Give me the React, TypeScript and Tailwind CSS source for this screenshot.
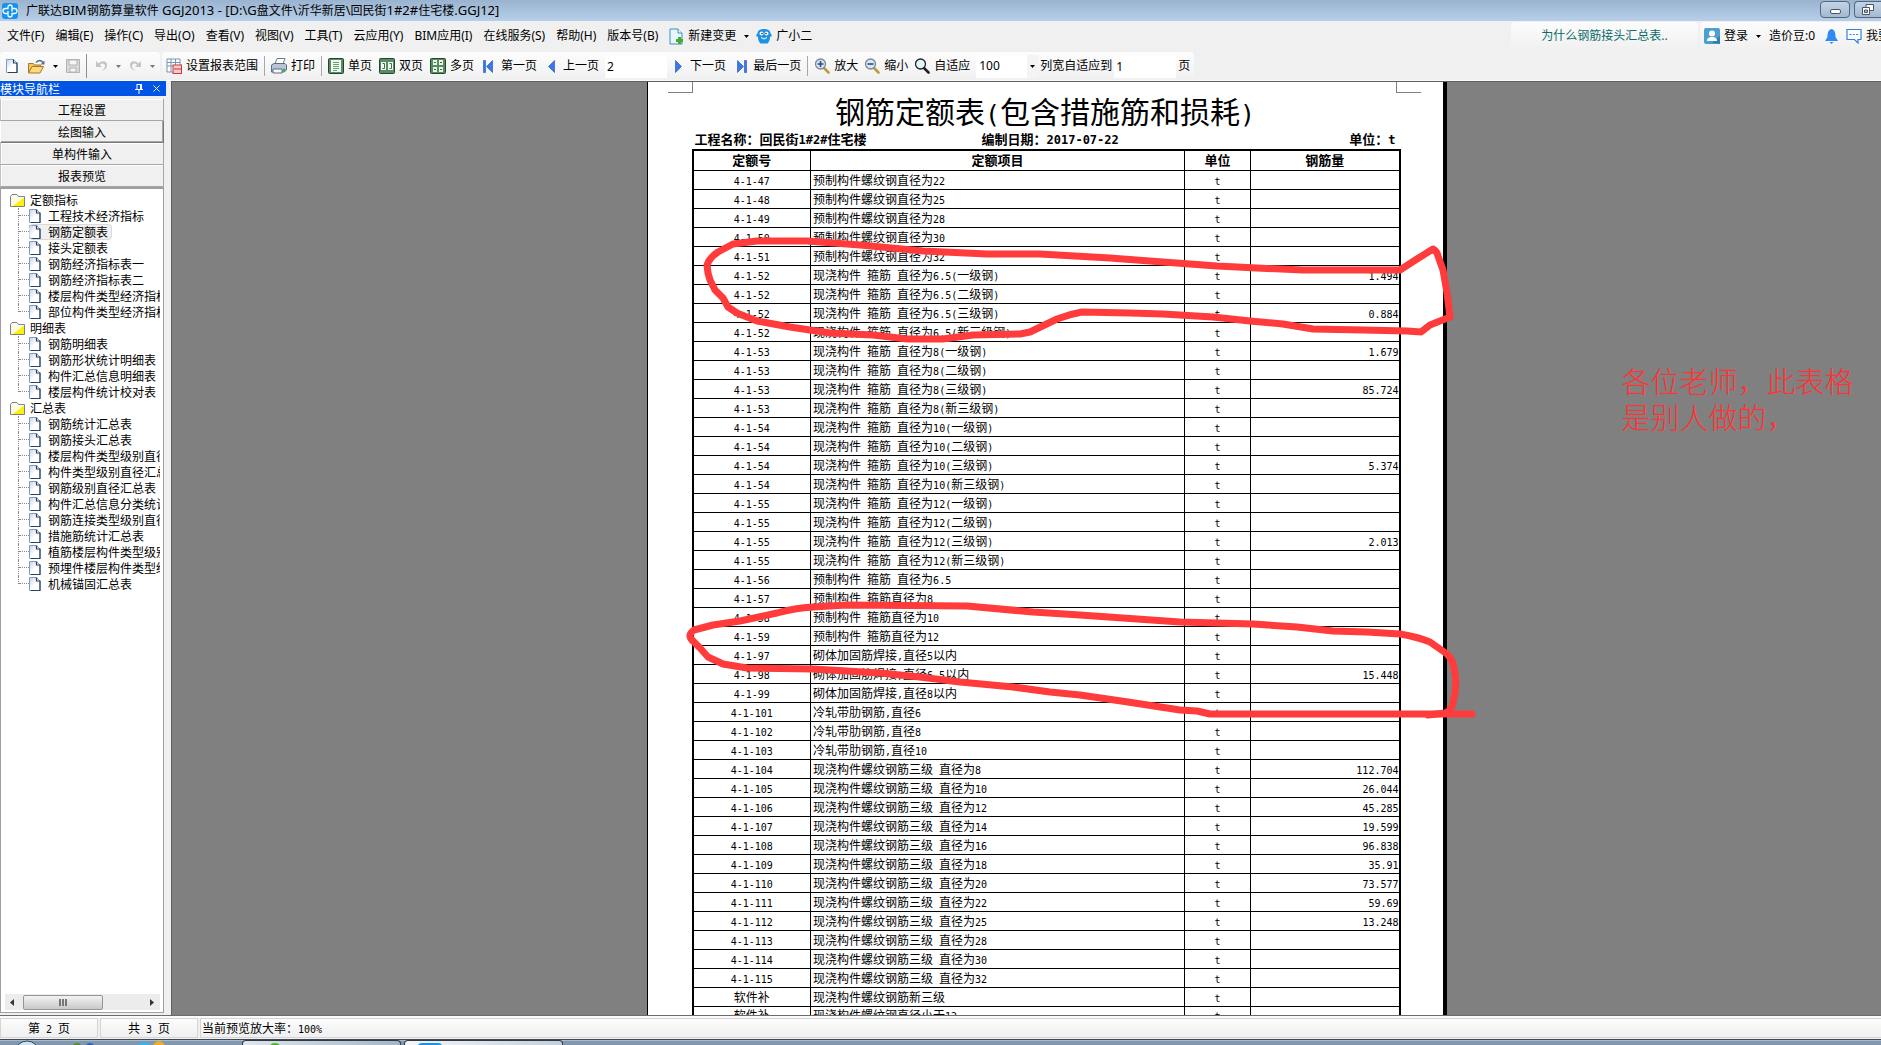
import type { ReactNode } from "react";
import { X } from "lucide-react";

const MENUS = [
  "文件(F)", "编辑(E)", "操作(C)", "导出(O)", "查看(V)", "视图(V)", "工具(T)",
  "云应用(Y)", "BIM应用(I)", "在线服务(S)", "帮助(H)", "版本号(B)",
];

const MODULES = ["工程设置", "绘图输入", "单构件输入", "报表预览"];

const TREE = [
  {
    name: "定额指标",
    items: ["工程技术经济指标", "钢筋定额表", "接头定额表", "钢筋经济指标表一", "钢筋经济指标表二", "楼层构件类型经济指标表", "部位构件类型经济指标表"],
  },
  {
    name: "明细表",
    items: ["钢筋明细表", "钢筋形状统计明细表", "构件汇总信息明细表", "楼层构件统计校对表"],
  },
  {
    name: "汇总表",
    items: [
      "钢筋统计汇总表", "钢筋接头汇总表", "楼层构件类型级别直径汇总表", "构件类型级别直径汇总表", "钢筋级别直径汇总表",
      "构件汇总信息分类统计表", "钢筋连接类型级别直径汇总表", "措施筋统计汇总表", "植筋楼层构件类型级别汇总表",
      "预埋件楼层构件类型级别表", "机械锚固汇总表",
    ],
  },
];

const ROWS: [string, string, string][] = [
  ["4-1-47", "预制构件螺纹钢直径为22", ""],
  ["4-1-48", "预制构件螺纹钢直径为25", ""],
  ["4-1-49", "预制构件螺纹钢直径为28", ""],
  ["4-1-50", "预制构件螺纹钢直径为30", ""],
  ["4-1-51", "预制构件螺纹钢直径为32", ""],
  ["4-1-52", "现浇构件 箍筋 直径为6.5(一级钢)", "1.494"],
  ["4-1-52", "现浇构件 箍筋 直径为6.5(二级钢)", ""],
  ["4-1-52", "现浇构件 箍筋 直径为6.5(三级钢)", "0.884"],
  ["4-1-52", "现浇构件 箍筋 直径为6.5(新三级钢)", ""],
  ["4-1-53", "现浇构件 箍筋 直径为8(一级钢)", "1.679"],
  ["4-1-53", "现浇构件 箍筋 直径为8(二级钢)", ""],
  ["4-1-53", "现浇构件 箍筋 直径为8(三级钢)", "85.724"],
  ["4-1-53", "现浇构件 箍筋 直径为8(新三级钢)", ""],
  ["4-1-54", "现浇构件 箍筋 直径为10(一级钢)", ""],
  ["4-1-54", "现浇构件 箍筋 直径为10(二级钢)", ""],
  ["4-1-54", "现浇构件 箍筋 直径为10(三级钢)", "5.374"],
  ["4-1-54", "现浇构件 箍筋 直径为10(新三级钢)", ""],
  ["4-1-55", "现浇构件 箍筋 直径为12(一级钢)", ""],
  ["4-1-55", "现浇构件 箍筋 直径为12(二级钢)", ""],
  ["4-1-55", "现浇构件 箍筋 直径为12(三级钢)", "2.013"],
  ["4-1-55", "现浇构件 箍筋 直径为12(新三级钢)", ""],
  ["4-1-56", "预制构件 箍筋 直径为6.5", ""],
  ["4-1-57", "预制构件 箍筋直径为8", ""],
  ["4-1-58", "预制构件 箍筋直径为10", ""],
  ["4-1-59", "预制构件 箍筋直径为12", ""],
  ["4-1-97", "砌体加固筋焊接,直径5以内", ""],
  ["4-1-98", "砌体加固筋焊接,直径6.5以内", "15.448"],
  ["4-1-99", "砌体加固筋焊接,直径8以内", ""],
  ["4-1-101", "冷轧带肋钢筋,直径6", ""],
  ["4-1-102", "冷轧带肋钢筋,直径8", ""],
  ["4-1-103", "冷轧带肋钢筋,直径10", ""],
  ["4-1-104", "现浇构件螺纹钢筋三级 直径为8", "112.704"],
  ["4-1-105", "现浇构件螺纹钢筋三级 直径为10", "26.044"],
  ["4-1-106", "现浇构件螺纹钢筋三级 直径为12", "45.285"],
  ["4-1-107", "现浇构件螺纹钢筋三级 直径为14", "19.599"],
  ["4-1-108", "现浇构件螺纹钢筋三级 直径为16", "96.838"],
  ["4-1-109", "现浇构件螺纹钢筋三级 直径为18", "35.91"],
  ["4-1-110", "现浇构件螺纹钢筋三级 直径为20", "73.577"],
  ["4-1-111", "现浇构件螺纹钢筋三级 直径为22", "59.69"],
  ["4-1-112", "现浇构件螺纹钢筋三级 直径为25", "13.248"],
  ["4-1-113", "现浇构件螺纹钢筋三级 直径为28", ""],
  ["4-1-114", "现浇构件螺纹钢筋三级 直径为30", ""],
  ["4-1-115", "现浇构件螺纹钢筋三级 直径为32", ""],
  ["软件补", "现浇构件螺纹钢筋新三级", ""],
  ["软件补", "现浇构件螺纹钢直径小于12", ""],
];

// Half-width characters take half of a full-width cell, so they get their own face
function Song({ text, latin = "font-['DejaVu_Sans_Mono',monospace] text-[10px]" }: { text: string; latin?: string }) {
  return (
    <>
      {text.split(/([\x20-\x7e]+)/).map((part, i) =>
        i % 2 ? (
          <span key={i} className={`leading-none whitespace-pre ${latin}`}>{part}</span>
        ) : (
          part
        )
      )}
    </>
  );
}

const BOLD_LATIN = "font-['DejaVu_Sans_Mono',monospace] text-xs";

function Caret({ dim = false }: { dim?: boolean }) {
  return (
    <svg width="5" height="3" viewBox="0 0 5 3" className={dim ? "text-[#777]" : "text-black"}>
      <path d="M0 0h5L2.5 3z" fill="currentColor" />
    </svg>
  );
}

function Sep() {
  return <div className="h-5 w-px bg-[#a8a8a8]" />;
}

function Tool({ label, icon, gap = "gap-1" }: { label: string; icon: ReactNode; gap?: string }) {
  return (
    <button className={`flex items-center whitespace-nowrap ${gap}`}>
      {icon}
      {label}
    </button>
  );
}

function DocIcon() {
  return (
    <svg width="12" height="14" viewBox="0 0 12 14" className="shrink-0">
      <path d="M.5.5h7l3.500 3.500v9.500H.5z" fill="url(#doc)" stroke="#7f9dbd" />
      <path d="M7.500.5v3.500H11v9.500H2" fill="none" stroke="#27415f" strokeWidth="1.200" />
      <defs>
        <linearGradient id="doc" x1="0" y1="0" x2="1" y2="1">
          <stop offset="0" stopColor="#c3d4e8" />
          <stop offset=".5" stopColor="#fff" />
        </linearGradient>
      </defs>
    </svg>
  );
}

function FolderIcon() {
  return (
    <svg width="15" height="13" viewBox="0 0 15 13" className="shrink-0">
      <path d="M.5 2.500 2 .5h5l1.500 2h6v10H.5z" fill="#fffde0" stroke="#808080" />
      <path d="M14 4v8H2.500z" fill="#fff200" />
      <path d="M1 3.500h13" stroke="#fff" />
    </svg>
  );
}

function PagesIcon({ kind }: { kind: "one" | "two" | "many" }) {
  return (
    <svg width="16" height="16" viewBox="0 0 16 16">
      <rect x=".5" y=".5" width="15" height="15" rx="1" fill="#5c8a63" stroke="#1f4a2a" />
      {kind === "one" && (
        <>
          <rect x="3" y="2" width="10" height="12" fill="#f4faf4" />
          <path d="M5 4.500h6M5 6.500h6M5 8.500h6M5 10.500h6M5 12.500h4" stroke="#6a9c72" />
        </>
      )}
      {kind === "two" && (
        <>
          <path d="M2 4h5v8H2zM9 4h5v8H9z" fill="#f4faf4" />
          <path d="M3.500 5.500h2v5h-2M10.500 5.500h2v5h-2" fill="none" stroke="#3b6f47" />
        </>
      )}
      {kind === "many" && (
        <>
          <path d="M3 2h4v5H3zM9 2h4v5H9zM3 9h4v5H3zM9 9h4v5H9z" fill="#e6f5e6" />
          <path d="M4 4.500h2M10 4.500h2M4 11.500h2M10 11.500h2" stroke="#3b6f47" />
        </>
      )}
    </svg>
  );
}

function NavIcon({ d, w }: { d: string; w: number }) {
  return (
    <svg width={w} height="13" viewBox={`0 0 ${w} 13`}>
      <path d={d} fill="#3a78e8" stroke="#1d4fb8" strokeWidth=".6" />
    </svg>
  );
}

function LensIcon({ mark, plain = false }: { mark?: string; plain?: boolean }) {
  return (
    <svg width="16" height="16" viewBox="0 0 16 16">
      <path d="M10 10l4.500 4.500" stroke={plain ? "#222" : "#c09a3c"} strokeWidth="2.600" strokeLinecap="round" />
      <circle cx="6.500" cy="6" r="5" fill={plain ? "#e3f6fb" : "#dbe6f3"} stroke={plain ? "#222" : "#7b8899"} strokeWidth="1.300" />
      {mark && <path d={mark} stroke="#2f4d86" strokeWidth="1.600" />}
    </svg>
  );
}

function ArrowBack({ flip = false }: { flip?: boolean }) {
  return (
    <svg width="13" height="12" viewBox="0 0 13 12" className={flip ? "-scale-x-100" : ""}>
      <path d="M1 1v6h6L5 5c2-2.500 5-1.500 5 1 0 2-1.500 3.500-3 5 3-1 5-3 5-6C12 1 7 0 3.500 3.500z" fill="#c4c4c4" />
    </svg>
  );
}

function TitleBar() {
  return (
    <header className="flex h-[21px] shrink-0 items-center justify-between bg-linear-to-b from-[#9ab3cf] to-[#b7cfe9] pl-0.5">
      <div className="flex items-center gap-2">
        <svg width="16" height="16" viewBox="0 0 16 16">
          <rect width="16" height="16" rx="3" fill="#1593f0" />
          <path d="M6 10.500H3.500a2 2 0 0 1 0-5H6V4a2 2 0 0 1 4 0v4.500M10 5.500h2.500a2 2 0 0 1 0 5H10V12a2 2 0 0 1-4 0V8" fill="none" stroke="#fff" strokeWidth="1.300" />
        </svg>
        <h1 className="text-xs leading-5">
          <Song text="广联达BIM钢筋算量软件 GGJ2013 - [D:\G盘文件\沂华新居\回民街1#2#住宅楼.GGJ12]" latin="text-[13px]" />
        </h1>
      </div>
      <div className="flex gap-1 self-start pt-px">
        <button aria-label="最小化" className="flex h-[17px] w-[30px] items-center justify-center rounded-sm border border-[#55677c] bg-linear-to-b from-[#c4d4e6] to-[#a3b9d1]">
          <span className="mt-1 h-[5px] w-[11px] rounded-xs border border-[#4a5664] bg-white" />
        </button>
        <button aria-label="还原" className="flex h-[17px] w-[27px] items-center justify-center rounded-l-sm border border-r-0 border-[#55677c] bg-linear-to-b from-[#c4d4e6] to-[#a3b9d1]">
          <svg width="12" height="11" viewBox="0 0 12 11">
            <path d="M4 .5h7.500v6H4z" fill="#fff" stroke="#4a5664" />
            <path d="M.5 3.500h7v7h-7z" fill="#fff" stroke="#4a5664" />
            <path d="M2.500 6h3v2.500h-3z" fill="#a3b9d1" stroke="#4a5664" />
          </svg>
        </button>
      </div>
    </header>
  );
}

function MenuBar() {
  return (
    <nav className="flex h-[31px] shrink-0 items-start justify-between overflow-hidden">
      <div className="flex h-[30px] items-center gap-[11px] whitespace-nowrap pl-[7px]">
        {MENUS.map((m) => (
          <button key={m}>{m}</button>
        ))}
        <button className="flex items-center gap-1">
          <svg width="15" height="17" viewBox="0 0 15 17">
            <path d="M1 1h8l4 4v11H1z" fill="#eaf6fd" stroke="#3c8fc0" />
            <path d="M9 1v4h4" fill="#fff" stroke="#3c8fc0" />
            <path d="M10.500 9v7M7 12.500h7" stroke="#3fae2a" strokeWidth="3" />
          </svg>
          新建变更
          <span className="pl-1"><Caret /></span>
        </button>
        <button className="-ml-1 flex items-center gap-1">
          <svg width="16" height="16" viewBox="0 0 16 16">
            <path d="M8 1c4 0 6 1.500 6.500 4L16 8l-2 1c0 3-1 5-2.500 6.500h-7C3 14 2 12 2 9L0 8l1.500-3C2 2.500 4 1 8 1z" fill="#1b93e4" />
            <circle cx="5.500" cy="5.500" r="2" fill="#fff" />
            <circle cx="10.500" cy="5.500" r="2" fill="#fff" />
            <circle cx="6" cy="5.500" r=".8" fill="#123" />
            <circle cx="10" cy="5.500" r=".8" fill="#123" />
            <path d="M5 9.500q3 3 6 0" fill="none" stroke="#fff" />
          </svg>
          广小二
        </button>
      </div>
      <div className="flex gap-0.5 pt-px">
        <a href="#faq" className="flex h-7 w-[187px] items-center justify-center rounded-t bg-linear-to-b from-[#fcfcfc] to-[#f0f0f0] text-[#0a6b6b]">
          为什么钢筋接头汇总表..
        </a>
        <div className="flex h-7 w-[181px] items-center overflow-hidden whitespace-nowrap rounded-tl bg-linear-to-b from-[#fcfcfc] to-[#f0f0f0] pl-1">
          <button className="flex items-center gap-1">
            <svg width="16" height="16" viewBox="0 0 16 16">
              <rect width="16" height="16" rx="2" fill="#4ba0d0" />
              <path d="M8 15 16 8v8z" fill="#2f7fb0" />
              <circle cx="8" cy="5.500" r="3" fill="#fff" />
              <path d="M3 13c0-3 2-4 5-4s5 1 5 4z" fill="#fff" />
            </svg>
            登录
            <span className="pr-2 pl-1"><Caret /></span>
          </button>
          <span>造价豆:0</span>
          <button aria-label="消息" className="pl-[10px]">
            <svg width="13" height="15" viewBox="0 0 13 15">
              <path d="M6.500 0C3 1 2.500 4 2.500 8L0 12h13l-2.500-4c0-4-.5-7-4-8zM4.500 13h4l-2 2z" fill="#2f8af5" />
            </svg>
          </button>
          <button className="flex items-center gap-1 pl-2">
            <svg width="16" height="16" viewBox="0 0 16 16">
              <path d="M1 1.500h14v10h-3V15l-3.500-3.500H1z" fill="#fff" stroke="#2f7fe8" strokeWidth="1.200" />
              <path d="M3.500 6.500h9" stroke="#2f7fe8" strokeDasharray="2 1.300" />
            </svg>
            我要
          </button>
        </div>
      </div>
    </nav>
  );
}

function ToolBar() {
  return (
    <div className="flex h-[29px] shrink-0 overflow-hidden border-b border-[#fafafa] whitespace-nowrap">
      <div className="flex w-[160px] shrink-0 items-center rounded bg-linear-to-b from-[#fdfdfd] to-[#f0f0f0] pl-[6px]">
        <button aria-label="新建"><DocIcon /></button>
        <button aria-label="打开" className="flex items-center gap-2 pl-[10px]">
          <svg width="17" height="15" viewBox="0 0 17 15">
            <path d="M.5 13.500v-9h5l1 1.500h6v3" fill="#f5c659" stroke="#a9762a" />
            <path d="M.5 14 4 7.500h11.500L12 14z" fill="#fbd97c" stroke="#a9762a" />
            <path d="M8 3.500q4-4 7 0" fill="none" stroke="#5a6d87" strokeWidth="1.300" />
            <path d="M16.500 1.500v4h-4z" fill="#5a6d87" />
          </svg>
          <Caret />
        </button>
        <button aria-label="保存" className="pl-2">
          <svg width="14" height="14" viewBox="0 0 14 14">
            <path d="M.5.5h13v13H.5z" fill="#d8d8d8" stroke="#b4b4b4" />
            <path d="M3 1h8v5H3zM4 9h6v4H4z" fill="#f6f6f6" stroke="#b4b4b4" />
          </svg>
        </button>
        <div className="mr-2 ml-[6px] h-6 w-px bg-[#8e8e8e]" />
        <button aria-label="撤销" className="flex items-center gap-2"><ArrowBack /><Caret dim /></button>
        <button aria-label="恢复" className="flex items-center gap-2 pl-2"><ArrowBack flip /><Caret dim /></button>
      </div>
      <div className="ml-0.5 flex shrink-0 items-center gap-[6px] rounded bg-linear-to-b from-[#fdfdfd] to-[#f0f0f0] px-1">
        <Tool
          label="设置报表范围"
          icon={
            <svg width="16" height="16" viewBox="0 0 16 16">
              <path d="M1 1h13v13H1zM1 4.500h13M1 8h13M5 1v13M9.500 1v7" fill="#fff" stroke="#7a93b5" />
              <rect x="7" y="7" width="8.500" height="8.500" fill="#f6caca" stroke="#c83a3a" />
              <path d="M8 11h7" stroke="#c83a3a" />
            </svg>
          }
        />
        <Sep />
        <Tool
          label="打印"
          icon={
            <svg width="16" height="16" viewBox="0 0 16 16">
              <path d="M4 6 6 .5h8L12 6z" fill="#fff" stroke="#6d7d92" />
              <path d="M.5 7 3 5.500h11l1.500 1.500v5L13 14H.5z" fill="#b9c5d6" stroke="#5d6c80" />
              <path d="M2 11h9v4H2z" fill="#f6f9fc" stroke="#5d6c80" />
              <circle cx="13" cy="12" r="1.500" fill="#37b24d" />
            </svg>
          }
        />
        <Sep />
        <div className="flex gap-[7px]">
          <Tool label="单页" icon={<PagesIcon kind="one" />} />
          <Tool label="双页" icon={<PagesIcon kind="two" />} />
          <Tool label="多页" icon={<PagesIcon kind="many" />} />
        </div>
        <span className="pl-[3px]">
          <Tool label="第一页" gap="gap-2" icon={<NavIcon w={10} d="M.5.5h2v12h-2zM9.500.5v12l-6-6z" />} />
        </span>
        <span className="pl-[5px]">
          <Tool label="上一页" gap="gap-2" icon={<NavIcon w={7} d="M6.500.5v12l-6-6z" />} />
        </span>
        <input aria-label="页码" defaultValue="2" className="h-[23px] w-[62px] bg-white pl-0.5" />
        <span className="pl-0.5">
          <Tool label="下一页" gap="gap-2" icon={<NavIcon w={7} d="M.5.5v12l6-6z" />} />
        </span>
        <span className="pl-[5px]">
          <Tool label="最后一页" gap="gap-[6px]" icon={<NavIcon w={10} d="M.5.5v12l6-6zM7.500.5h2v12h-2z" />} />
        </span>
        <Sep />
        <Tool label="放大" icon={<LensIcon mark="M3.500 6h6M6.500 3v6" />} />
        <Tool label="缩小" icon={<LensIcon mark="M3.500 6h6" />} />
        <Tool label="自适应" icon={<LensIcon plain />} />
        <div className="relative flex items-center">
          <select aria-label="缩放比例" className="h-[23px] w-[62px] appearance-none bg-white pl-[3px]">
            <option>100</option>
          </select>
          <span className="pointer-events-none absolute right-0 flex h-[23px] w-[11px] items-center justify-center bg-[#f4f4f4]">
            <Caret />
          </span>
        </div>
        <label className="-ml-1 flex items-center gap-0.5">
          列宽自适应到
          <input defaultValue="1" className="h-[23px] w-[62px] bg-white pl-0.5" />
          页
        </label>
      </div>
    </div>
  );
}

function Sidebar() {
  return (
    <aside className="flex w-[166px] shrink-0 flex-col pb-0.5 text-xs">
      <div className="flex h-[15px] shrink-0 items-center justify-between bg-[#0055e5] text-white">
        <h2 className="leading-[15px]">模块导航栏</h2>
        <div className="flex items-center gap-2 pr-1">
          <button aria-label="固定">
            <svg width="8" height="10" viewBox="0 0 8 10">
              <path d="M2 0v5M2 .5h4M5.500 0v5M6.500 0v5M0 5.500h8M4 6v4" fill="none" stroke="#fff" />
            </svg>
          </button>
          <button aria-label="关闭"><X size={11} strokeWidth={2} /></button>
        </div>
      </div>
      <div className="mt-[3px] flex shrink-0 flex-col pr-0.5">
        {MODULES.map((m, i) => (
          <button
            key={m}
            className={`h-[22px] border-r border-b border-l bg-[#f0f0f0] leading-5 ${i === 1 ? "border-[#777] border-l-white shadow-[inset_-1px_-1px_0_#a9a9a9]" : "border-[#a6a6a6] border-l-[#c4c4c4] shadow-[inset_1px_1px_0_#fff]"}`}
          >
            {m}
          </button>
        ))}
      </div>
      <div className="mr-0.5 flex min-h-0 flex-1 flex-col border border-t-2 border-[#9f9f9f] bg-white">
        <ul className="flex-1 overflow-hidden pt-[3px] pr-[3px] pl-[9px]">
          {TREE.map((g) => (
            <li key={g.name}>
              <button className="flex h-4 items-center gap-[5px]">
                <FolderIcon />
                {g.name}
              </button>
              <ul>
                {g.items.map((t, i) => (
                  <li key={t} className="flex h-4 overflow-hidden pl-2">
                    {/* branch line */}
                    <div className={`w-px shrink-0 border-l border-dotted border-[#888] ${i === g.items.length - 1 ? "h-2" : "h-4"}`} />
                    <div className="h-2 w-[10px] shrink-0 border-b border-dotted border-[#888]" />
                    <button
                      className={`flex h-4 items-center gap-[7px] rounded-sm pr-1 leading-4 whitespace-nowrap ${t === "钢筋定额表" ? "bg-[#f0f0f0] outline -outline-offset-1 outline-[#d9d9d9]" : ""}`}
                    >
                      <DocIcon />
                      {t}
                    </button>
                  </li>
                ))}
              </ul>
            </li>
          ))}
        </ul>
        <div className="mr-[3px] mb-0.5 ml-1 flex h-4 shrink-0 items-center bg-[#ececec] pr-[6px] pl-[5px]">
          <svg width="4" height="7" viewBox="0 0 4 7"><path d="M4 0v7L0 3.500z" fill="#333" /></svg>
          <div className="ml-[9px] flex h-[15px] w-20 items-center justify-center gap-px rounded-xs border border-[#959595] bg-linear-to-b from-[#f3f3f3] to-[#c9c9cc]">
            <span className="h-[7px] w-0.5 bg-[#777]" />
            <span className="h-[7px] w-0.5 bg-[#777]" />
            <span className="h-[7px] w-0.5 bg-[#777]" />
          </div>
          <svg width="4" height="7" viewBox="0 0 4 7" className="ml-auto"><path d="M0 0v7l4-3.500z" fill="#333" /></svg>
        </div>
      </div>
    </aside>
  );
}

function Marks() {
  return (
    <>
      <svg width="860" height="660" viewBox="647 82 860 660" className="pointer-events-none absolute top-0 -left-px">
        <g fill="none" stroke="#ff3b3b" strokeWidth="7" strokeLinecap="round" strokeLinejoin="round">
          <path d="M708 273 707 265Q709 258 718 252L733 244 757 241 807 241 860 245 923 251 987 254 1040 254 1110 258 1163 262 1217 266 1257 268 1303 270 1400 270 1417 259 1433 249Q1437 251 1438 256L1443 270 1447 293 1450 317 1430 325 1421 332 1407 331 1363 330 1313 329 1283 324 1250 321 1213 317 1163 314 1130 313 1082 312Q1070 314 1057 319L1030 332 1020 334 973 335 943 339 907 339 873 335 830 333 790 327 757 321 737 313 728 307 723 298 715 290 710 280z" />
          <path d="M692 640Q687 635 694 630L713 625 740 621 777 613Q795 608 813 607L847 605 967 606 1033 612 1080 615 1180 622 1253 624 1297 627 1333 631 1367 632 1400 634Q1418 637 1430 642L1447 654Q1453 660 1454 668 1458 685 1453 703 1451 711 1445 713L1428 715" />
          <path d="M1472 714H1210L1197 711 1180 710 1128 702 1080 695 1050 692 1013 687 960 682 920 677 880 673 813 669 747 668 723 664 708 657 700 648 692 640" />
        </g>
      </svg>
      <p className="absolute top-[280px] left-[974px] text-[29px] leading-9 font-light whitespace-nowrap text-[#ff3333]">
        各位老师，此表格
        <br />
        是别人做的，
      </p>
    </>
  );
}

function Report() {
  return (
    <main className="flex min-w-0 flex-1 justify-center overflow-hidden border-t border-l border-[#606060] bg-[#808080] pl-10">
      <div className="relative h-fit w-[800px] shrink-0 border-r-4 border-l border-black bg-white px-11 pt-3 pb-10">
        {/* page margin corners */}
        <div className="absolute top-0 left-5 h-[11px] w-[25px] border-r border-b border-[#808080]" />
        <div className="absolute top-0 right-[22px] h-[11px] w-[25px] border-b border-l border-[#808080]" />
        <h2 className="h-[34px] text-center text-[30px] leading-8">
          <Song text="钢筋定额表(包含措施筋和损耗)" latin="font-['DejaVu_Sans_Mono',monospace] text-[25px]" />
        </h2>
        <div className="grid h-[21px] grid-cols-[287px_1fr_auto] items-center px-[3px] text-[13px] leading-5 font-bold">
          <span><Song text="工程名称：回民街1#2#住宅楼" latin={BOLD_LATIN} /></span>
          <span><Song text="编制日期：2017-07-22" latin={BOLD_LATIN} /></span>
          <span><Song text="单位：t" latin={BOLD_LATIN} /></span>
        </div>
        <table className="w-[709px] table-fixed border-collapse border-2 border-black text-xs">
          <colgroup>
            <col className="w-[118px]" />
            <col />
            <col className="w-[66px]" />
            <col className="w-[149px]" />
          </colgroup>
          <thead>
            <tr className="h-5 text-[13px] leading-4">
              <th className="border border-black p-0">定额号</th>
              <th className="border border-black p-0">定额项目</th>
              <th className="border border-black p-0">单位</th>
              <th className="border border-black p-0">钢筋量</th>
            </tr>
          </thead>
          <tbody>
            {ROWS.map(([code, name, qty], i) => (
              <tr key={i} className="h-[19px] leading-4">
                <td className="border border-black p-0 text-center"><Song text={code} /></td>
                <td className="border border-black p-0 pl-0.5 whitespace-nowrap"><Song text={name} /></td>
                <td className="border border-black p-0 text-center"><Song text="t" /></td>
                <td className="border border-black p-0 text-right"><Song text={qty} /></td>
              </tr>
            ))}
          </tbody>
        </table>
        <Marks />
      </div>
    </main>
  );
}

function StatusBar() {
  return (
    <footer className="flex h-[23px] shrink-0 gap-0.5 border-t-2 border-[#fafafa] pb-px font-['Noto_Sans_CJK_SC',sans-serif] text-xs leading-[18px]">
      <div className="w-[98px] border border-[#d5d5d5] bg-linear-to-b from-[#fcfcfc] to-[#f0f0f0] text-center"><Song text="第 2 页" /></div>
      <div className="w-[98px] border border-[#d5d5d5] bg-linear-to-b from-[#fcfcfc] to-[#f0f0f0] text-center"><Song text="共 3 页" /></div>
      <div className="flex-1 border border-r-0 border-[#d5d5d5] bg-linear-to-b from-[#fcfcfc] to-[#f0f0f0] pl-px"><Song text="当前预览放大率：100%" /></div>
    </footer>
  );
}

function TaskBar() {
  return (
    <div className="flex h-[6px] shrink-0 overflow-hidden border-t border-[#3d4854] bg-[#8197ad] shadow-[inset_0_1px_0_#a9bccd]">
      <svg width="242" height="6" viewBox="0 0 242 6">
        <circle cx="27" cy="13" r="12" fill="#cfe3ee" stroke="#2c4a63" />
        <circle cx="77" cy="8" r="5" fill="#5a8a2a" />
        <circle cx="90" cy="8" r="5" fill="#2a66b8" />
        <circle cx="144" cy="9" r="7" fill="#3ab4ea" />
        <path d="M153 6q1-4 6-5 5 1 6 5z" fill="#f2b01e" />
      </svg>
      <div className="w-[159px] rounded-t-sm border border-b-0 border-[#2f3a46] bg-linear-to-r from-[#dfe6ec] to-[#a4b5c6]">
        <svg width="60" height="5" viewBox="0 0 60 5"><ellipse cx="32" cy="7" rx="6" ry="5" fill="#4fb52a" /></svg>
      </div>
      <div className="ml-[3px] w-[159px] rounded-t-sm border border-b-0 border-[#2f3a46] bg-linear-to-r from-[#f4f7fa] to-[#c3cfda]">
        <svg width="60" height="5" viewBox="0 0 60 5"><path d="M13 5q0-3 4-3h16q4 0 4 3z" fill="#1593f0" /></svg>
      </div>
    </div>
  );
}

export default function App() {
  return (
    <div className="flex h-screen flex-col overflow-hidden bg-[#f0f0f0] font-['Noto_Sans','Noto_Sans_CJK_SC',sans-serif] text-xs text-black">
      <TitleBar />
      <MenuBar />
      <ToolBar />
      <div className="flex min-h-0 flex-1 gap-[5px] border-b border-[#6b6b6b] font-['Noto_Sans_CJK_SC',sans-serif]">
        <Sidebar />
        <Report />
      </div>
      <StatusBar />
      <TaskBar />
    </div>
  );
}
